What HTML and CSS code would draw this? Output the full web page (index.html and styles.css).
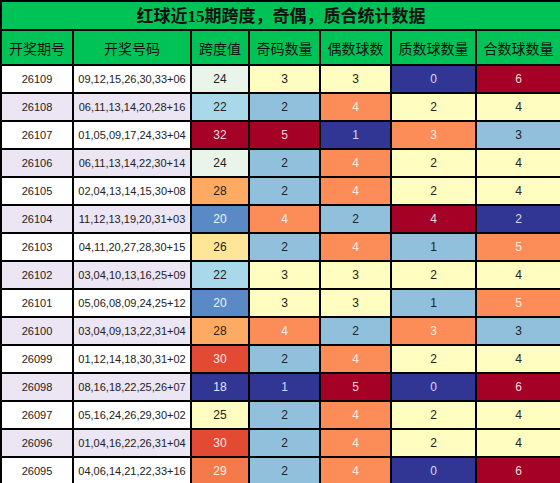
FILE: index.html
```html
<!DOCTYPE html>
<html lang="zh">
<head>
<meta charset="UTF-8">
<meta name="viewport" content="width=device-width, initial-scale=1.0">
<title>红球近15期跨度，奇偶，质合统计数据</title>
<link rel="stylesheet" href="styles.css">
</head>
<body>

<table class="stats">
    <colgroup>
        <col class="w-issue">
        <col class="w-nums">
        <col class="w-span">
        <col class="w-odd">
        <col class="w-even">
        <col class="w-prime">
        <col class="w-comp">
    </colgroup>
    <thead>
        <tr class="title-row"><th colspan="7"><span class="title">红球近<span class="num">15</span>期跨度，奇偶，质合统计数据</span></th></tr>
        <tr class="head-row">
            <th>开奖期号</th>
            <th>开奖号码</th>
            <th>跨度值</th>
            <th>奇码数量</th>
            <th>偶数球数</th>
            <th>质数球数量</th>
            <th>合数球数量</th>
        </tr>
    </thead>
    <tbody>
        <tr><td>26109</td><td>09,12,15,26,30,33+06</td><td class="s24">24</td><td class="h3">3</td><td class="h3">3</td><td class="h1">0</td><td class="h5">6</td></tr>
        <tr class="alt"><td>26108</td><td>06,11,13,14,20,28+16</td><td class="s22">22</td><td class="h2">2</td><td class="h4">4</td><td class="h3">2</td><td class="h3">4</td></tr>
        <tr><td>26107</td><td>01,05,09,17,24,33+04</td><td class="s32">32</td><td class="h5">5</td><td class="h1">1</td><td class="h4">3</td><td class="h2">3</td></tr>
        <tr class="alt"><td>26106</td><td>06,11,13,14,22,30+14</td><td class="s24">24</td><td class="h2">2</td><td class="h4">4</td><td class="h3">2</td><td class="h3">4</td></tr>
        <tr><td>26105</td><td>02,04,13,14,15,30+08</td><td class="s28">28</td><td class="h2">2</td><td class="h4">4</td><td class="h3">2</td><td class="h3">4</td></tr>
        <tr class="alt"><td>26104</td><td>11,12,13,19,20,31+03</td><td class="s20">20</td><td class="h4">4</td><td class="h2">2</td><td class="h5">4</td><td class="h1">2</td></tr>
        <tr><td>26103</td><td>04,11,20,27,28,30+15</td><td class="s26">26</td><td class="h2">2</td><td class="h4">4</td><td class="h2">1</td><td class="h4">5</td></tr>
        <tr class="alt"><td>26102</td><td>03,04,10,13,16,25+09</td><td class="s22">22</td><td class="h3">3</td><td class="h3">3</td><td class="h3">2</td><td class="h3">4</td></tr>
        <tr><td>26101</td><td>05,06,08,09,24,25+12</td><td class="s20">20</td><td class="h3">3</td><td class="h3">3</td><td class="h2">1</td><td class="h4">5</td></tr>
        <tr class="alt"><td>26100</td><td>03,04,09,13,22,31+04</td><td class="s28">28</td><td class="h4">4</td><td class="h2">2</td><td class="h4">3</td><td class="h2">3</td></tr>
        <tr><td>26099</td><td>01,12,14,18,30,31+02</td><td class="s30">30</td><td class="h2">2</td><td class="h4">4</td><td class="h3">2</td><td class="h3">4</td></tr>
        <tr class="alt"><td>26098</td><td>08,16,18,22,25,26+07</td><td class="s18">18</td><td class="h1">1</td><td class="h5">5</td><td class="h1">0</td><td class="h5">6</td></tr>
        <tr><td>26097</td><td>05,16,24,26,29,30+02</td><td class="s25">25</td><td class="h2">2</td><td class="h4">4</td><td class="h3">2</td><td class="h3">4</td></tr>
        <tr class="alt"><td>26096</td><td>01,04,16,22,26,31+04</td><td class="s30">30</td><td class="h2">2</td><td class="h4">4</td><td class="h3">2</td><td class="h3">4</td></tr>
        <tr><td>26095</td><td>04,06,14,21,22,33+16</td><td class="s29">29</td><td class="h2">2</td><td class="h4">4</td><td class="h1">0</td><td class="h5">6</td></tr>
    </tbody>
</table>

</body>
</html>
```

FILE: styles.css
```css
body {
    margin: 0;
    padding: 0;
    background-color: #fff;
    font-family: "Liberation Sans", "Noto Sans CJK SC", sans-serif;
}
.stats {
    width: 560px;
    table-layout: fixed;
    border-collapse: collapse;
    color: #222;
}
.w-issue { width: 72px; }
.w-nums { width: 118px; }
.w-span { width: 58px; }
.w-odd { width: 71px; }
.w-even { width: 71px; }
.w-prime { width: 85px; }
.w-comp { width: 85px; }
.stats th, .stats td {
    border: 2px solid #000;
    padding: 0;
    text-align: center;
    white-space: nowrap;
    overflow: hidden;
}
.stats th {
    background-color: #00c357;
    color: #111;
    font-weight: normal;
    font-family: "Noto Sans CJK SC", sans-serif;
}
.title-row th {
    height: 25px;
    font-size: 17px;
    font-weight: bold;
    line-height: 25px;
}
.title .num {
    font-family: "Liberation Serif", serif;
    font-weight: bold;
}
.head-row th {
    height: 33px;
    font-size: 14px;
}
.stats td {
    height: 26px;
    font-size: 11px;
    background-color: #fff;
}
.stats tr.alt td:nth-child(-n+2) {
    background-color: #ebe5f4;
}
.stats td[class] {
    font-size: 12px;
}

/* span value heat colours */
.stats td.s18 { background-color: #313695; color: #e8e8f0; }
.stats td.s20 { background-color: #5a8ac6; color: #eef2f8; }
.stats td.s22 { background-color: #a8d8ea; }
.stats td.s24 { background-color: #e9f5e8; }
.stats td.s25 { background-color: #fffdc0; }
.stats td.s26 { background-color: #fee597; }
.stats td.s28 { background-color: #fdab62; }
.stats td.s29 { background-color: #f47a4b; color: #fbeee8; }
.stats td.s30 { background-color: #e34a33; color: #fbe8e4; }
.stats td.s32 { background-color: #a50026; color: #f4dde2; }

/* count heat colours, low to high */
.stats td.h1 { background-color: #313695; color: #d8d8ec; }
.stats td.h2 { background-color: #90c0dc; }
.stats td.h3 { background-color: #fffdc0; }
.stats td.h4 { background-color: #fc8d59; color: #fdeee6; }
.stats td.h5 { background-color: #a50026; color: #f0d8de; }
```
